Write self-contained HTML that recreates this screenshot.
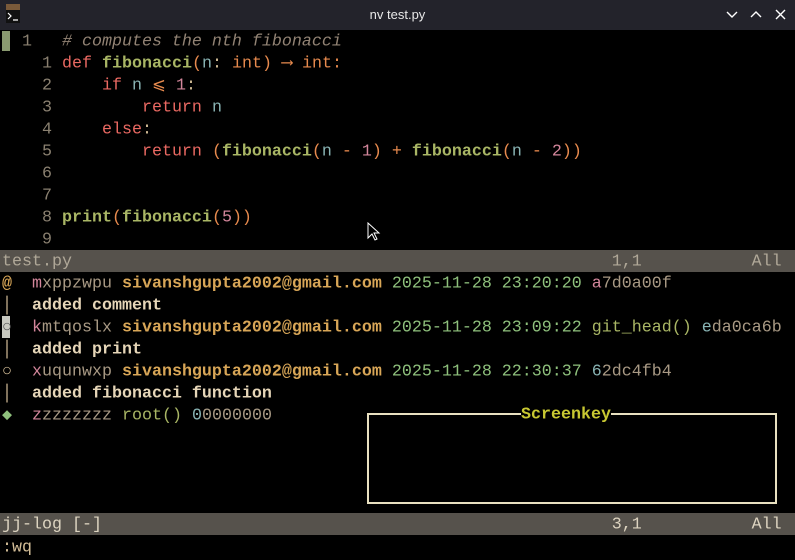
<!DOCTYPE html>
<html><head><meta charset="utf-8"><style>
html,body{margin:0;padding:0;background:#000;width:795px;height:559px;overflow:hidden}
body{font-family:"Liberation Mono","DejaVu Sans Mono",monospace;font-size:16.67px;color:#d4be98}
.title{position:absolute;left:0;top:0;width:795px;height:30px;background:#23232b;}
.title .t{position:absolute;left:0;width:795px;top:7px;text-align:center;font-family:"Liberation Sans",sans-serif;font-size:13px;color:#e8e8e8}
.r{position:absolute;left:2px;height:22px;line-height:22px;white-space:pre;transform:translateY(1.5px)}
.k{color:#ea6962}.f{color:#a9b665;font-weight:bold}.o{color:#e78a4e}.n{color:#89b4b4}.p{color:#d3869b}
.c{color:#928374;font-style:italic}.ln{color:#8a8070}
.st{position:absolute;left:0;width:795px;height:22px;background:#56524c}
.b{font-weight:bold;color:#e6d6b8}
.em{color:#d8a657;font-weight:bold}.dt{color:#8ec07c}.h{color:#a89984}
.bar{color:#d4be98}
</style></head><body>
<div class="title">
<svg style="position:absolute;left:5px;top:4px" width="16" height="20"><rect x="1" y="0" width="14" height="6" fill="#7a5a3a"/><rect x="1" y="6" width="14" height="13" fill="#111"/><path d="M3 9l3 3-3 3M8 16h5" stroke="#fff" stroke-width="1.2" fill="none"/></svg>
<div class="t">nv test.py</div>
<svg style="position:absolute;left:726px;top:9px" width="64" height="12"><path d="M1 3l5 5 5-5M25 8l5-5 5 5M50 1l9 9M59 1l-9 9" stroke="#fff" stroke-width="1.4" fill="none"/></svg>
</div>
<div style="position:absolute;left:2px;top:31px;width:8px;height:20px;background:#8a9a70"></div>
<div class="r" style="top:30px"><span class="ln">  1   </span><span class="c"># computes the nth fibonacci</span></div>
<div class="r" style="top:52px"><span class="ln">    1 </span><span class="k">def</span> <span class="f">fibonacci</span><span class="o">(</span><span class="n">n</span>: <span class="o">int) ⟶ int:</span></div>
<div class="r" style="top:74px"><span class="ln">    2 </span>    <span class="k">if</span> <span class="n">n</span> <span class="o">⩽</span> <span class="p">1</span>:</div>
<div class="r" style="top:96px"><span class="ln">    3 </span>        <span class="k">return</span> <span class="n">n</span></div>
<div class="r" style="top:118px"><span class="ln">    4 </span>    <span class="k">else</span>:</div>
<div class="r" style="top:140px"><span class="ln">    5 </span>        <span class="k">return</span> <span class="o">(</span><span class="f">fibonacci</span><span class="o">(</span><span class="n">n</span> <span class="o">-</span> <span class="p">1</span><span class="o">)</span> <span class="o">+</span> <span class="f">fibonacci</span><span class="o">(</span><span class="n">n</span> <span class="o">-</span> <span class="p">2</span><span class="o">))</span></div>
<div class="r" style="top:162px"><span class="ln">    6 </span></div>
<div class="r" style="top:184px"><span class="ln">    7 </span></div>
<div class="r" style="top:206px"><span class="ln">    8 </span><span class="f">print</span><span class="o">(</span><span class="f">fibonacci</span><span class="o">(</span><span class="p">5</span><span class="o">))</span></div>
<div class="r" style="top:228px"><span class="ln">    9 </span></div>
<svg style="position:absolute;left:367px;top:222px" width="14" height="20"><path d="M1 1v15l4-4 3 6 2-1-3-6h5z" fill="#000" stroke="#fff" stroke-width="1"/></svg>
<div class="st" style="top:250px"></div>
<div class="r" style="top:250px;color:#b0a898">test.py                                                      1,1           All</div>
<div class="r" style="top:272px"><span class="em">@</span>  <span class="p">m</span><span class="h">xppzwpu</span> <span class="em">sivanshgupta2002@gmail.com</span> <span class="dt">2025-11-28 23:20:20</span> <span class="p">a</span><span class="h">7d0a00f</span></div>
<div class="r" style="top:294px"><span class="bar">│</span>  <span class="b">added comment</span></div>
<div style="position:absolute;left:2px;top:316px;width:8px;height:22px;background:#c8c8c0"></div>
<div class="r" style="top:316px"><span style="color:#555">○</span>  <span class="p">k</span><span class="h">mtqoslx</span> <span class="em">sivanshgupta2002@gmail.com</span> <span class="dt">2025-11-28 23:09:22</span> <span style="color:#a9b665">git_head()</span> <span class="n">e</span><span class="h">da0ca6b</span></div>
<div class="r" style="top:338px"><span class="bar">│</span>  <span class="b">added print</span></div>
<div class="r" style="top:360px">○  <span class="p">x</span><span class="h">uqunwxp</span> <span class="em">sivanshgupta2002@gmail.com</span> <span class="dt">2025-11-28 22:30:37</span> <span class="n">6</span><span class="h">2dc4fb4</span></div>
<div class="r" style="top:382px"><span class="bar">│</span>  <span class="b">added fibonacci function</span></div>
<div class="r" style="top:404px"><span style="color:#8ec07c">◆</span>  <span class="p">z</span><span class="h">zzzzzzz</span> <span style="color:#a9b665">root()</span> <span class="n">0</span><span class="h">0000000</span></div>
<div style="position:absolute;left:367px;top:413px;width:406px;height:87px;border:2px solid #e8e0c0"></div>
<div class="r" style="top:403px;left:521px;background:#000;color:#c8c832;font-weight:bold">Screenkey</div>
<div class="st" style="top:513px"></div>
<div class="r" style="top:513px;color:#ddd4c0">jj-log [-]                                                   3,1           All</div>
<div class="r" style="top:536px">:wq</div>
</body></html>
